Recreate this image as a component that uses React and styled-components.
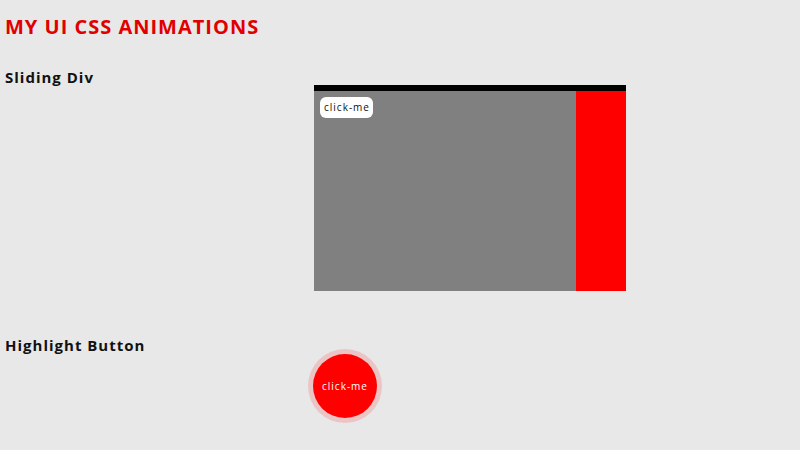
import React from 'react'
import styled, { createGlobalStyle } from 'styled-components'

const GlobalStyle = createGlobalStyle`
  body {
    margin: 0;
    background: #e8e8e8;
    font-family: 'Open Sans', sans-serif;
  }
`;

const App = () => {
  return (
    <Page>
      <GlobalStyle />
      <Title>MY UI CSS ANIMATIONS</Title>
      <Section>
        <Label>Sliding Div</Label>
        <SlideBox>
          <SlidePanel>
            <SmallButton>click-me</SmallButton>
          </SlidePanel>
          <SlideDrawer />
        </SlideBox>
      </Section>
      <Section $gap={43}>
        <Label>Highlight Button</Label>
        <RoundButton>click-me</RoundButton>
      </Section>
    </Page>
  )
}

export default App

const Page = styled.div`
  padding: 0 5px;
  height: 450px;
  box-sizing: border-box;
  overflow: hidden;
`;

const Title = styled.h1`
  margin: 0;
  padding-top: 13px;
  font-size: 20px;
  font-weight: 700;
  letter-spacing: 1px;
  color: #e00000;
  line-height: 28px;
`;

const Section = styled.div`
  display: flex;
  flex-direction: row;
  align-items: flex-start;
  margin-top: ${p => p.$gap || 25}px;
`;

const Label = styled.h2`
  margin: 0;
  width: 309px;
  flex-shrink: 0;
  font-size: 15px;
  font-weight: 700;
  letter-spacing: 1px;
  color: #111;
  line-height: 22px;
`;

const SlideBox = styled.div`
  margin-top: 19px;
  width: 312px;
  height: 206px;
  border-top: 6px solid #000;
  box-sizing: border-box;
  display: flex;
  background: #808080;
`;

const SlidePanel = styled.div`
  flex: 1;
  padding: 6px;
`;

const SlideDrawer = styled.div`
  width: 50px;
  background: #ff0000;
`;

const SmallButton = styled.button`
  display: block;
  border: none;
  background: #fff;
  border-radius: 6px;
  padding: 3px 3px 3px 4px;
  font-family: 'Open Sans', sans-serif;
  font-size: 10px;
  letter-spacing: 1px;
  color: #111;
  line-height: 15px;
`;

const RoundButton = styled.button`
  margin-top: 20px;
  margin-left: -1px;
  width: 64px;
  height: 64px;
  border-radius: 50%;
  border: none;
  background: #ff0000;
  box-shadow: 0 0 0 5px rgba(255, 0, 0, 0.15);
  color: #fff;
  font-family: 'Open Sans', sans-serif;
  font-size: 10px;
  letter-spacing: 1px;
  padding: 0;
`;
